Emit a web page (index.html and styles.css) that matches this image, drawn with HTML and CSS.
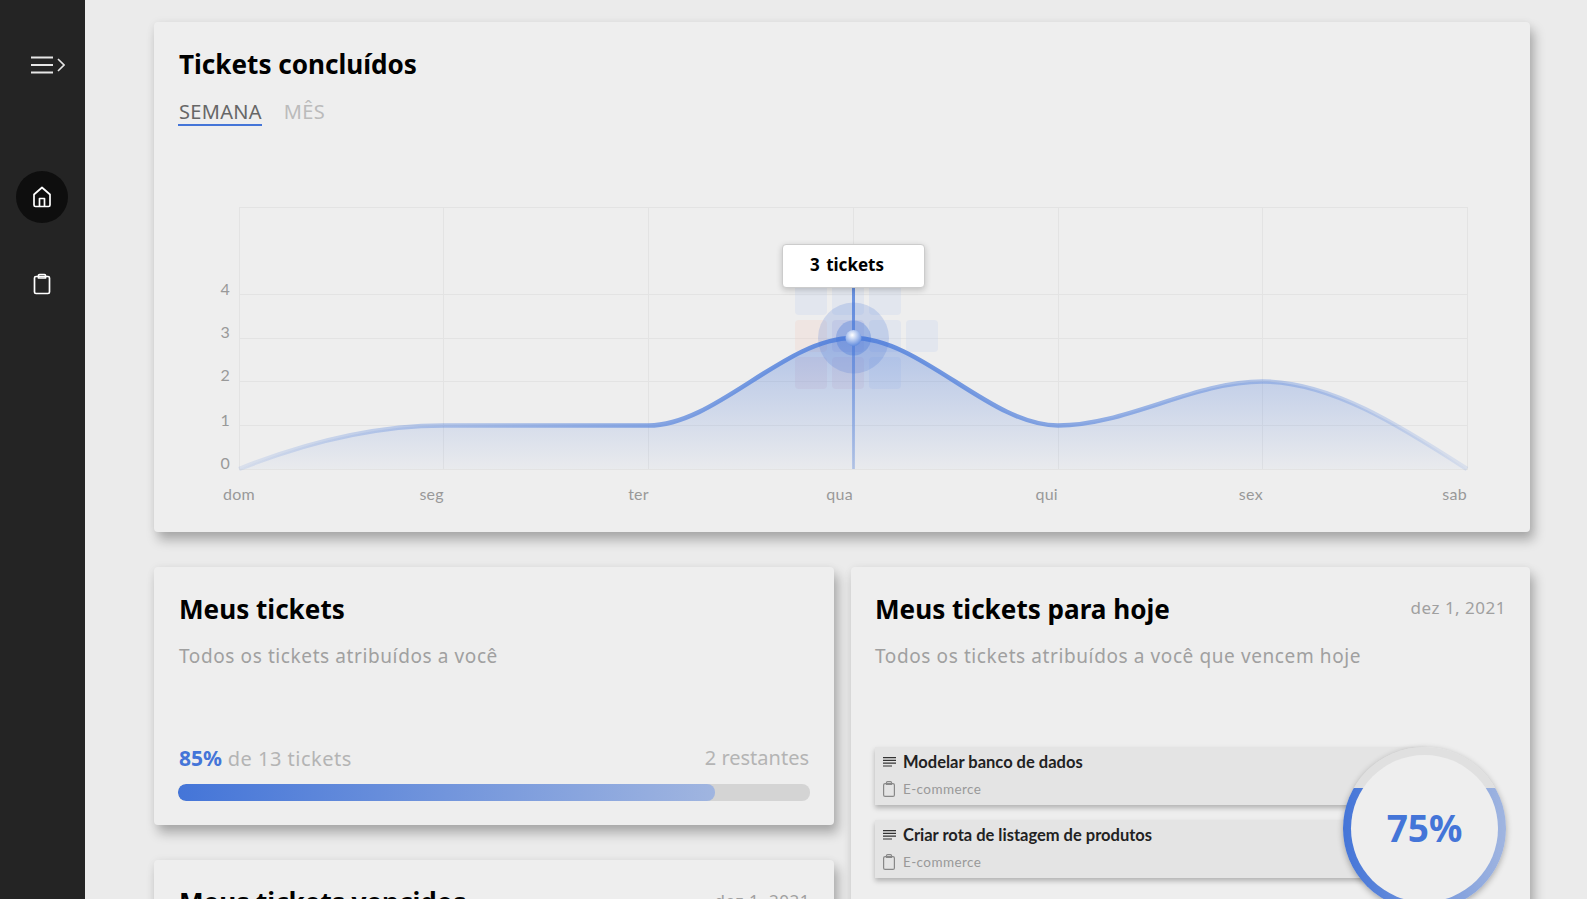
FILE: index.html
```html
<!DOCTYPE html>
<html>
<head>
  <title>Dashboard</title>
  <link rel="stylesheet" href="styles.css">
</head>
<body>
  <nav class="sidebar">
    <button class="menu-btn">
      <svg width="34" height="18" viewBox="0 0 34 18" fill="none" stroke="#e6e6e6" stroke-width="2">
        <path d="M0 1.5h22M0 9h22M0 16.500h22"/>
        <path d="M27 3l6 6-6 6" stroke-width="1.6"/>
      </svg>
    </button>
    <a class="nav-item active">
      <svg width="20" height="22" viewBox="0 0 20 22" fill="none" stroke="#fff" stroke-width="1.700" stroke-linejoin="round">
        <path d="M2 8.500L10 1.500l8 7v10.500a1.500 1.500 0 0 1-1.500 1.500h-13A1.500 1.500 0 0 1 2 19z"/>
        <path d="M7.500 20.500v-8h5v8"/>
      </svg>
    </a>
    <a class="nav-item">
      <svg width="18" height="22" viewBox="0 0 18 22" fill="none" stroke="#fff" stroke-width="1.700" stroke-linejoin="round">
        <rect x="1.500" y="3.500" width="15" height="17" rx="1.500"/>
        <path d="M5.500 5V2.500a1 1 0 0 1 1-1h5a1 1 0 0 1 1 1V5z"/>
      </svg>
    </a>
  </nav>

  <main class="content">
    <section class="card chart-card">
      <h2>Tickets concluídos</h2>
      <div class="tabs">
        <span class="tab active">SEMANA</span>
        <span class="tab">MÊS</span>
      </div>
      <svg class="chart" width="1326" height="370" viewBox="179 150 1326 370">
        <defs>
          <linearGradient id="areaFill" x1="0" y1="0" x2="0" y2="1">
            <stop offset="0" stop-color="#4475d8" stop-opacity="0.36"/>
            <stop offset="1" stop-color="#4475d8" stop-opacity="0.03"/>
          </linearGradient>
          <linearGradient id="lineStroke" gradientUnits="userSpaceOnUse" x1="239" y1="0" x2="1467" y2="0">
            <stop offset="0" stop-color="#5f8ade" stop-opacity="0.14"/>
            <stop offset="0.5" stop-color="#5f8ade" stop-opacity="1"/>
            <stop offset="1" stop-color="#5f8ade" stop-opacity="0.14"/>
          </linearGradient>
          <linearGradient id="crossFade" x1="0" y1="0" x2="0" y2="1">
            <stop offset="0" stop-color="#5f8ade" stop-opacity="0.95"/>
            <stop offset="1" stop-color="#5f8ade" stop-opacity="0.35"/>
          </linearGradient>
          <radialGradient id="ball" cx="0.42" cy="0.32" r="0.7">
            <stop offset="0" stop-color="#fff"/>
            <stop offset="1" stop-color="#5f8ade"/>
          </radialGradient>
        </defs>

        <g class="grid">
          <path d="M239 207.500H1468M239 294.500H1468M239 338.500H1468M239 381.500H1468M239 425.500H1468M239 469.500H1468"/>
          <path d="M239.500 207V470M443.500 207V470M648.500 207V470M853.500 207V470M1058.500 207V470M1262.500 207V470M1467.500 207V470"/>
        </g>

        <g class="ghost">
          <rect x="795" y="283" width="32" height="32" rx="4" fill="#c5d3ee"/>
          <rect x="832" y="283" width="32" height="32" rx="4" fill="#c5d3ee"/>
          <rect x="869" y="283" width="32" height="32" rx="4" fill="#c5d3ee"/>
          <rect x="795" y="320" width="32" height="32" rx="4" fill="#f2cfc6"/>
          <rect x="832" y="320" width="32" height="32" rx="4" fill="#c5bfe0"/>
          <rect x="869" y="320" width="32" height="32" rx="4" fill="#c5d3ee"/>
          <rect x="906" y="320" width="32" height="32" rx="4" fill="#c5d3ee"/>
          <rect x="795" y="357" width="32" height="32" rx="4" fill="#e2c4cf"/>
          <rect x="832" y="357" width="32" height="32" rx="4" fill="#e2c4cf"/>
          <rect x="869" y="357" width="32" height="32" rx="4" fill="#c5d3ee"/>
        </g>

        <path fill="url(#areaFill)" d="M239 469C312 440 380 425.500 443.500 425.500L648.500 425.500C716 425.500 785 338 853 338C921 338 990 425.500 1058 425.500C1126 425.500 1194 381.500 1262.500 381.500C1330 381.500 1399 425 1467 469Z"/>
        <path fill="none" stroke="url(#lineStroke)" stroke-width="4.500" d="M239 469C312 440 380 425.500 443.500 425.500L648.500 425.500C716 425.500 785 338 853 338C921 338 990 425.500 1058 425.500C1126 425.500 1194 381.500 1262.500 381.500C1330 381.500 1399 425 1467 469"/>

        <rect x="852" y="287" width="3" height="182" fill="url(#crossFade)"/>
        <circle cx="853.500" cy="338" r="35.500" fill="#4475d8" fill-opacity="0.2"/>
        <circle cx="853.500" cy="338" r="17.500" fill="#4475d8" fill-opacity="0.34"/>
        <circle cx="853.500" cy="338" r="8" fill="url(#ball)"/>

        <g class="axis">
          <text x="230" y="295" text-anchor="end">4</text>
          <text x="230" y="338" text-anchor="end">3</text>
          <text x="230" y="381" text-anchor="end">2</text>
          <text x="230" y="426" text-anchor="end">1</text>
          <text x="230" y="469" text-anchor="end">0</text>
          <text x="239" y="500" text-anchor="middle">dom</text>
          <text x="444" y="500" text-anchor="end">seg</text>
          <text x="649" y="500" text-anchor="end">ter</text>
          <text x="853" y="500" text-anchor="end">qua</text>
          <text x="1058" y="500" text-anchor="end">qui</text>
          <text x="1263" y="500" text-anchor="end">sex</text>
          <text x="1467" y="500" text-anchor="end">sab</text>
        </g>
      </svg>
      <div class="tooltip">3 tickets</div>
    </section>

    <div class="columns">
      <div class="column">
        <section class="card summary-card">
          <h2>Meus tickets</h2>
          <p class="subtitle">Todos os tickets atribuídos a você</p>
          <div class="progress-info">
            <span><b>85%</b> de 13 tickets</span>
            <span class="remaining">2 restantes</span>
          </div>
          <div class="progress-track">
            <div class="progress-fill" style="width: 85%"></div>
          </div>
        </section>
        <section class="card">
          <div class="card-head">
            <h2>Meus tickets vencidos</h2>
            <span class="date">dez 1, 2021</span>
          </div>
        </section>
      </div>

      <section class="card today-card">
        <div class="card-head">
          <h2>Meus tickets para hoje</h2>
          <span class="date">dez 1, 2021</span>
        </div>
        <p class="subtitle">Todos os tickets atribuídos a você que vencem hoje</p>

        <ul class="ticket-list">
          <li class="ticket">
            <div class="ticket-title">
              <svg width="13" height="10" viewBox="0 0 13 10" stroke="#333" stroke-width="1.200"><path d="M0 .6h13M0 3.400h13M0 6.200h13M0 9h9"/></svg>
              Modelar banco de dados
            </div>
            <div class="ticket-project">
              <svg width="12" height="16" viewBox="0 0 12 16" fill="none" stroke="#888" stroke-width="1.200"><rect x=".6" y="2.600" width="10.800" height="12.800" rx="1.500"/><path d="M3.500 3.500V1.600a1 1 0 0 1 1-1h3a1 1 0 0 1 1 1v1.900z"/></svg>
              E-commerce
            </div>
          </li>
          <li class="ticket">
            <div class="ticket-title">
              <svg width="13" height="10" viewBox="0 0 13 10" stroke="#333" stroke-width="1.200"><path d="M0 .6h13M0 3.400h13M0 6.200h13M0 9h9"/></svg>
              Criar rota de listagem de produtos
            </div>
            <div class="ticket-project">
              <svg width="12" height="16" viewBox="0 0 12 16" fill="none" stroke="#888" stroke-width="1.200"><rect x=".6" y="2.600" width="10.800" height="12.800" rx="1.500"/><path d="M3.500 3.500V1.600a1 1 0 0 1 1-1h3a1 1 0 0 1 1 1v1.900z"/></svg>
              E-commerce
            </div>
          </li>
        </ul>

        <div class="ring">
          <div class="ring-inner">75%</div>
        </div>
      </section>
    </div>
  </main>
</body>
</html>
```

FILE: styles.css
```css
* {
  box-sizing: border-box;
}
html, body {
  height: 100%;
}
body {
  margin: 0;
  display: flex;
  overflow: hidden;
  background-color: #ebebeb;
  font-family: "Noto Sans", sans-serif;
  color: #000;
}
.sidebar {
  width: 85px;
  flex-shrink: 0;
  background-color: #242424;
  display: flex;
  flex-direction: column;
  align-items: center;
  padding-top: 56px;
}
.menu-btn {
  background: none;
  border: none;
  padding: 0;
  margin-left: 11px;
  height: 18px;
  line-height: 0;
}
.nav-item {
  width: 52px;
  height: 52px;
  border-radius: 50%;
  display: flex;
  align-items: center;
  justify-content: center;
  margin-left: -1px;
}
.menu-btn + .nav-item {
  margin-top: 97px;
}
.nav-item + .nav-item {
  margin-top: 35px;
}
.nav-item.active {
  background-color: #0e0e0e;
}
.content {
  flex: 1;
  padding: 22px 57px 0 69px;
  display: flex;
  flex-direction: column;
  gap: 35px;
}
.card {
  position: relative;
  background-color: #eee;
  border-radius: 4px;
  padding: 25px;
  box-shadow: 4px 8px 12px rgba(0, 0, 0, 0.28), 0 0 8px rgba(0, 0, 0, 0.05);
}
h2 {
  margin: 0;
  font-size: 26.100px;
  line-height: 34px;
  font-weight: 700;
}
.chart-card {
  height: 510px;
  flex-shrink: 0;
}
.tabs {
  display: flex;
  gap: 22px;
  margin-top: 17px;
  font-size: 20px;
  line-height: 27px;
  letter-spacing: 0.3px;
}
.tab {
  color: #bbb;
  height: 28px;
  border-bottom: 2px solid transparent;
}
.tab.active {
  color: #666;
  margin-left: -1px;
  padding-left: 1px;
  border-bottom-color: #4475d8;
}
.chart {
  position: absolute;
  left: 25px;
  top: 128px;
}
.grid path {
  fill: none;
  stroke: #e3e3e3;
  stroke-width: 1;
}
.ghost {
  opacity: 0.28;
}
.axis text {
  font-family: Lato, sans-serif;
  font-size: 16px;
  letter-spacing: 0.3px;
  fill: #999;
}
.tooltip {
  position: absolute;
  left: 628px;
  top: 222px;
  width: 143px;
  height: 44px;
  padding-left: 27px;
  background-color: #fff;
  border: 1px solid #ccc;
  border-radius: 4px;
  box-shadow: 0 2px 6px rgba(0, 0, 0, 0.2);
  font-size: 17px;
  font-weight: 700;
  line-height: 39px;
  word-spacing: 2px;
}
.columns {
  display: grid;
  grid-template-columns: 680px 679px;
  gap: 17px;
}
.column {
  display: flex;
  flex-direction: column;
  gap: 35px;
}
.summary-card {
  height: 258px;
}
.card-head {
  display: flex;
  justify-content: space-between;
  align-items: flex-start;
}
.date {
  margin-right: -1px;
  color: #a0a0a0;
  font-size: 17px;
  line-height: 32px;
  letter-spacing: 0.5px;
}
.subtitle {
  margin: 17px 0 0;
  color: #a0a0a0;
  font-size: 19px;
  line-height: 26px;
  letter-spacing: 0.6px;
}
.progress-info {
  display: flex;
  justify-content: space-between;
  margin-top: 75px;
  color: #b4b4b4;
  font-size: 20px;
  line-height: 28px;
  letter-spacing: 0.5px;
}
.progress-info b {
  color: #4475d8;
  font-size: 21px;
  letter-spacing: 0;
}
.progress-info .remaining {
  letter-spacing: 0;
}
.progress-track {
  height: 17px;
  margin: 11px -1px 0;
  background-color: #d4d4d4;
  border-radius: 8px;
  overflow: hidden;
}
.progress-fill {
  height: 100%;
  border-radius: 8px;
  background: linear-gradient(to right, #4475d8, #a0b5e0);
}
.today-card {
  height: 900px;
  padding-left: 24px;
}
.ticket-list {
  list-style: none;
  margin: 78px 0 0;
  padding: 0;
  width: 549px;
  display: flex;
  flex-direction: column;
  gap: 15px;
}
.ticket {
  height: 58px;
  padding: 3px 8px;
  background-color: #e4e4e4;
  box-shadow: 0 3px 5px rgba(0, 0, 0, 0.25);
}
.ticket-title {
  display: flex;
  align-items: center;
  gap: 7px;
  font-family: Lato, sans-serif;
  font-size: 16.500px;
  line-height: 24px;
  font-weight: 700;
  color: #222;
}
.ticket-project {
  display: flex;
  align-items: center;
  gap: 8px;
  margin-top: 6px;
  color: #999;
  font-family: Lato, sans-serif;
  font-size: 13.500px;
  line-height: 18px;
  letter-spacing: 0.4px;
}
.ring {
  position: absolute;
  left: 492px;
  top: 180px;
  width: 163px;
  height: 163px;
  padding: 8px;
  border-radius: 50%;
  background: linear-gradient(to bottom, #e0e0e0 25%, transparent 25%), linear-gradient(to right, #4475d8, #a0b5e0);
  box-shadow: 0 2px 6px rgba(0, 0, 0, 0.3);
}
.ring-inner {
  width: 100%;
  height: 100%;
  padding-bottom: 2px;
  border-radius: 50%;
  background-color: #eee;
  display: flex;
  align-items: center;
  justify-content: center;
  color: #4475d8;
  font-size: 37px;
  font-weight: 700;
}
```
